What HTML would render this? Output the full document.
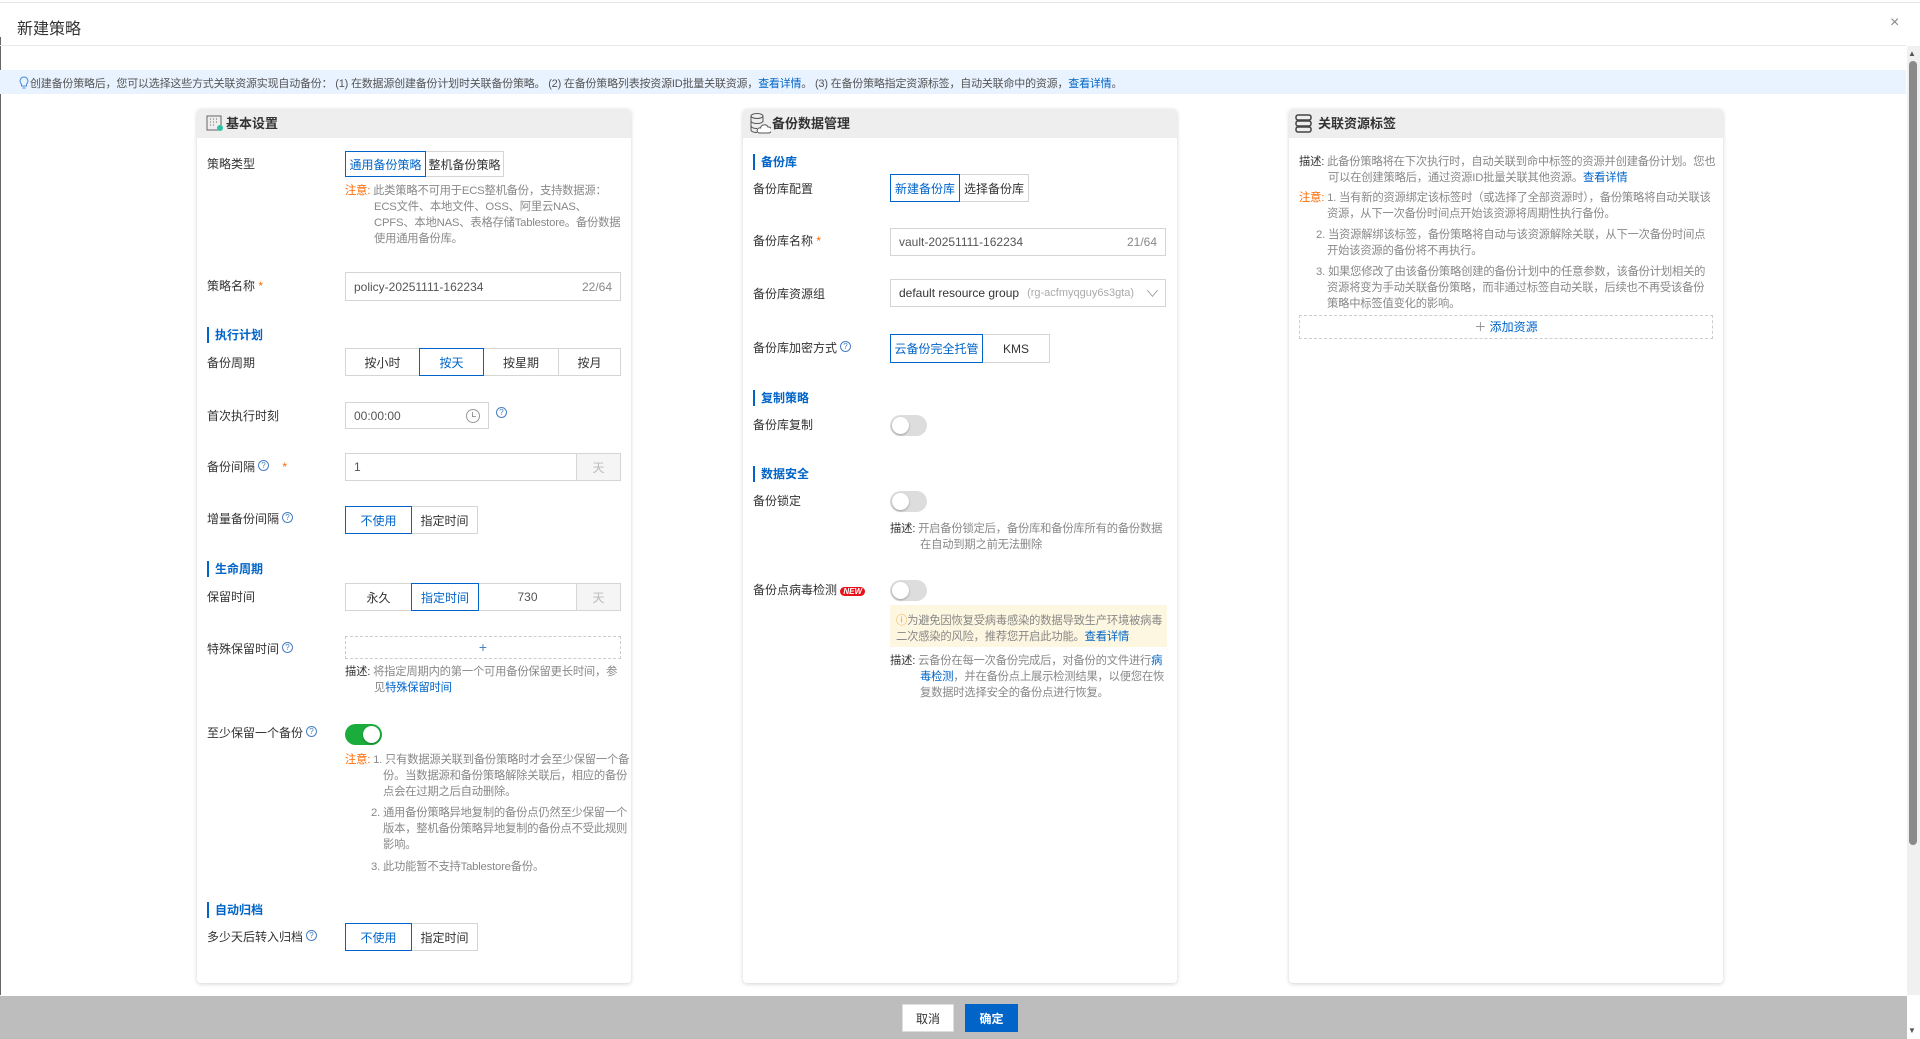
<!DOCTYPE html>
<html><head><meta charset="utf-8"><style>
*{margin:0;padding:0;box-sizing:border-box}
body{width:1920px;height:1039px;overflow:hidden;background:#fff;font-family:"Liberation Sans","Noto Sans CJK SC",sans-serif;font-size:12px;color:#333;position:relative}
.a{position:absolute}
.lbl{position:absolute;font-size:12px;color:#333;line-height:14px;white-space:nowrap}
.sec{position:absolute;font-size:12px;color:#0064c8;font-weight:bold;border-left:2px solid #0064c8;padding-left:6px;line-height:16px}
.card{position:absolute;top:109px;width:434px;height:874px;background:#fff;border-radius:4px;box-shadow:0 1px 4px rgba(0,0,0,.18);overflow:hidden}
.ch{height:29px;background:#eee;font-size:13px;font-weight:bold;color:#333;line-height:29px;padding-left:29px;position:relative}
.btn{position:absolute;border:1px solid #d5d5d5;background:#fff;text-align:center;font-size:12px;color:#333;display:flex;align-items:center;justify-content:center;white-space:nowrap}
.sel{border:1px solid #0064c8;color:#0064c8;z-index:2}
.inp{position:absolute;border:1px solid #d5d5d5;background:#fff;font-size:12px;color:#555;display:flex;align-items:center;padding:0 8px;white-space:nowrap}
.add{position:absolute;background:#f5f5f5;border:1px solid #d5d5d5;color:#bbb;display:flex;align-items:center;justify-content:center}
.txt{position:absolute;font-size:11.3px;color:#888;line-height:16px;white-space:nowrap;letter-spacing:-0.2px}
.q{display:inline-block;width:11px;height:11px;border:1px solid #4a7fc1;border-radius:50%;font-size:8px;line-height:9px;text-align:center;color:#4a7fc1;vertical-align:top;margin-left:3px}
.tg{position:absolute;width:37px;height:21px;border-radius:11px;background:#ddd}
.tg::after{content:"";position:absolute;top:2px;left:2px;width:17px;height:17px;border-radius:50%;background:#fff;box-shadow:0 1px 2px rgba(0,0,0,.3)}
.tg.on{background:#1aad3b}.tg.on::after{left:18px}
.or{color:#ff6a00}.bl{color:#0064c8}.dk{color:#333}
</style></head><body>
<div class="a" style="left:0;top:0;width:1920px;height:3px;border-bottom:1px solid #e5e5e5"></div>
<div class="a" style="left:0;top:37px;width:1px;height:958px;background:#666"></div>
<div class="a" style="left:17px;top:15px;font-size:16px;color:#333">新建策略</div>
<div class="a" style="left:1890px;top:14px;font-size:16px;color:#888">×</div>
<div class="a" style="left:0;top:45px;width:1906px;height:1px;background:#e8e8e8"></div>
<div class="a" style="left:0;top:70px;width:1906px;height:24px;background:#e8f3ff"></div>
<div class="a" style="left:18px;top:75px;font-size:11px;color:#555;white-space:nowrap;letter-spacing:-0.2px"><svg width="12" height="13" viewBox="0 0 12 13" style="vertical-align:-2px"><path d="M6 1a4 4 0 0 0-2.5 7v2h5V8A4 4 0 0 0 6 1zM4.5 12h3" fill="none" stroke="#4a8ad8"/></svg>创建备份策略后，您可以选择这些方式关联资源实现自动备份： (1) 在数据源创建备份计划时关联备份策略。 (2) 在备份策略列表按资源ID批量关联资源，<span class="bl">查看详情</span>。 (3) 在备份策略指定资源标签，自动关联命中的资源，<span class="bl">查看详情</span>。</div>
<!-- scrollbar -->
<div class="a" style="left:1907px;top:46px;width:13px;height:949px;background:#f0f0f0"></div>
<div class="a" style="left:1909px;top:61px;width:8px;height:784px;background:#8a8a8a;border-radius:4px"></div>
<div class="a" style="left:1908px;top:49px;font-size:8px;color:#555">▲</div>
<div class="a" style="left:1908px;top:1026px;font-size:8px;color:#555">▼</div>

<!-- Card 1 -->
<div class="card" style="left:197px">
<div class="ch"><svg class="a" style="left:9px;top:6px" width="18" height="17" viewBox="0 0 18 17"><rect x="1" y="1" width="14" height="14" fill="none" stroke="#666"/><path d="M4 4h1M7 4h1M10 4h1M4 7h1M7 7h1M10 7h1M4 10h1M7 10h1" stroke="#666"/><circle cx="14" cy="13" r="3" fill="#2bc3a8"/></svg>基本设置</div>
</div>
<div class="lbl" style="left:207px;top:157px">策略类型</div>
<div class="btn sel" style="left:345px;top:151px;width:81px;height:26px">通用备份策略</div>
<div class="btn" style="left:425px;top:151px;width:79px;height:26px">整机备份策略</div>
<div class="txt" style="left:345px;top:183px"><span class="or">注意:</span> 此类策略不可用于ECS整机备份，支持数据源：</div>
<div class="txt" style="left:374px;top:199px">ECS文件、本地文件、OSS、阿里云NAS、</div>
<div class="txt" style="left:374px;top:215px">CPFS、本地NAS、表格存储Tablestore。备份数据</div>
<div class="txt" style="left:374px;top:231px">使用通用备份库。</div>
<div class="lbl" style="left:207px;top:279px">策略名称 <span class="or">*</span></div>
<div class="inp" style="left:345px;top:272px;width:276px;height:29px;justify-content:space-between"><span>policy-20251111-162234</span><span style="color:#888">22/64</span></div>
<div class="sec" style="left:207px;top:327px">执行计划</div>
<div class="lbl" style="left:207px;top:356px">备份周期</div>
<div class="btn" style="left:345px;top:348px;width:75px;height:28px">按小时</div>
<div class="btn sel" style="left:419px;top:348px;width:65px;height:28px">按天</div>
<div class="btn" style="left:483px;top:348px;width:76px;height:28px">按星期</div>
<div class="btn" style="left:558px;top:348px;width:63px;height:28px">按月</div>
<div class="lbl" style="left:207px;top:409px">首次执行时刻</div>
<div class="inp" style="left:345px;top:402px;width:144px;height:27px;justify-content:space-between"><span>00:00:00</span><span style="display:inline-block;width:14px;height:14px;border:1px solid #999;border-radius:50%;position:relative"><span style="position:absolute;left:5px;top:2px;width:4px;height:5px;border-left:1px solid #999;border-bottom:1px solid #999"></span></span></div>
<div class="a" style="left:493px;top:407px"><span class="q">?</span></div>
<div class="lbl" style="left:207px;top:460px">备份间隔<span class="q">?</span> &nbsp; &nbsp;<span class="or">*</span></div>
<div class="inp" style="left:345px;top:453px;width:232px;height:28px">1</div>
<div class="add" style="left:576px;top:453px;width:45px;height:28px">天</div>
<div class="lbl" style="left:207px;top:512px">增量备份间隔<span class="q">?</span></div>
<div class="btn sel" style="left:345px;top:506px;width:67px;height:28px">不使用</div>
<div class="btn" style="left:411px;top:506px;width:67px;height:28px">指定时间</div>
<div class="sec" style="left:207px;top:561px">生命周期</div>
<div class="lbl" style="left:207px;top:590px">保留时间</div>
<div class="btn" style="left:345px;top:583px;width:67px;height:28px">永久</div>
<div class="btn sel" style="left:411px;top:583px;width:68px;height:28px">指定时间</div>
<div class="inp" style="left:478px;top:583px;width:99px;height:28px;justify-content:center">730</div>
<div class="add" style="left:576px;top:583px;width:45px;height:28px">天</div>
<div class="lbl" style="left:207px;top:642px">特殊保留时间<span class="q">?</span></div>
<div class="a" style="left:345px;top:636px;width:276px;height:23px;border:1px dashed #ccc;text-align:center;color:#4a7fc1;font-size:14px;line-height:20px">+</div>
<div class="txt" style="left:345px;top:664px"><span class="dk">描述:</span> 将指定周期内的第一个可用备份保留更长时间，参</div>
<div class="txt" style="left:374px;top:680px">见<span class="bl">特殊保留时间</span></div>
<div class="lbl" style="left:207px;top:726px">至少保留一个备份<span class="q">?</span></div>
<div class="tg on" style="left:345px;top:724px"></div>
<div class="txt" style="left:345px;top:752px"><span class="or">注意:</span> 1. 只有数据源关联到备份策略时才会至少保留一个备</div>
<div class="txt" style="left:383px;top:768px">份。当数据源和备份策略解除关联后，相应的备份</div>
<div class="txt" style="left:383px;top:784px">点会在过期之后自动删除。</div>
<div class="txt" style="left:371px;top:805px">2. 通用备份策略异地复制的备份点仍然至少保留一个</div>
<div class="txt" style="left:383px;top:821px">版本，整机备份策略异地复制的备份点不受此规则</div>
<div class="txt" style="left:383px;top:837px">影响。</div>
<div class="txt" style="left:371px;top:859px">3. 此功能暂不支持Tablestore备份。</div>
<div class="sec" style="left:207px;top:902px">自动归档</div>
<div class="lbl" style="left:207px;top:930px">多少天后转入归档<span class="q">?</span></div>
<div class="btn sel" style="left:345px;top:923px;width:67px;height:28px">不使用</div>
<div class="btn" style="left:411px;top:923px;width:67px;height:28px">指定时间</div>

<!-- Card 2 -->
<div class="card" style="left:743px">
<div class="ch"><svg class="a" style="left:6px;top:3px" width="22" height="24" viewBox="0 0 22 24"><ellipse cx="8" cy="4" rx="6" ry="2.5" fill="none" stroke="#555"/><path d="M2 4v14c0 1.4 2.7 2.5 6 2.5M14 4v6M2 9c0 1.4 2.7 2.5 6 2.5s6-1.1 6-2.5M2 14c0 1.4 2.7 2.5 6 2.5" fill="none" stroke="#555"/><path d="M10 21h10a3 3 0 0 0-1-6 4 4 0 0 0-7.5 1A2.5 2.5 0 0 0 10 21z" fill="#fff" stroke="#555"/></svg>备份数据管理</div>
</div>
<div class="sec" style="left:753px;top:154px">备份库</div>
<div class="lbl" style="left:753px;top:182px">备份库配置</div>
<div class="btn sel" style="left:890px;top:174px;width:70px;height:28px">新建备份库</div>
<div class="btn" style="left:959px;top:174px;width:70px;height:28px">选择备份库</div>
<div class="lbl" style="left:753px;top:234px">备份库名称 <span class="or">*</span></div>
<div class="inp" style="left:890px;top:228px;width:276px;height:28px;justify-content:space-between"><span>vault-20251111-162234</span><span style="color:#888">21/64</span></div>
<div class="lbl" style="left:753px;top:287px">备份库资源组</div>
<div class="inp" style="left:890px;top:279px;width:276px;height:28px;color:#333"><span>default resource group</span><span style="color:#aaa;margin-left:8px;font-size:11px">(rg-acfmyqguy6s3gta)</span><span style="margin-left:auto;color:#999;transform:scaleX(1.6);font-size:9px">∨</span></div>
<div class="lbl" style="left:753px;top:341px">备份库加密方式<span class="q">?</span></div>
<div class="btn sel" style="left:890px;top:334px;width:93px;height:29px">云备份完全托管</div>
<div class="btn" style="left:982px;top:334px;width:68px;height:29px">KMS</div>
<div class="sec" style="left:753px;top:390px">复制策略</div>
<div class="lbl" style="left:753px;top:418px">备份库复制</div>
<div class="tg" style="left:890px;top:415px"></div>
<div class="sec" style="left:753px;top:466px">数据安全</div>
<div class="lbl" style="left:753px;top:494px">备份锁定</div>
<div class="tg" style="left:890px;top:491px"></div>
<div class="txt" style="left:890px;top:521px"><span class="dk">描述:</span> 开启备份锁定后，备份库和备份库所有的备份数据</div>
<div class="txt" style="left:920px;top:537px">在自动到期之前无法删除</div>
<div class="lbl" style="left:753px;top:583px">备份点病毒检测 <span style="background:#e8101a;color:#fff;font-size:8px;font-weight:bold;font-style:italic;border-radius:6px;padding:0 3px">NEW</span></div>
<div class="tg" style="left:890px;top:580px"></div>
<div class="a" style="left:890px;top:605px;width:277px;height:42px;background:#fdf6e0"></div>
<div class="txt" style="left:896px;top:613px"><span style="color:#e6a23c">ⓘ</span>为避免因恢复受病毒感染的数据导致生产环境被病毒</div>
<div class="txt" style="left:896px;top:629px">二次感染的风险，推荐您开启此功能。<span class="bl">查看详情</span></div>
<div class="txt" style="left:890px;top:653px"><span class="dk">描述:</span> 云备份在每一次备份完成后，对备份的文件进行<span class="bl">病</span></div>
<div class="txt" style="left:920px;top:669px"><span class="bl">毒检测</span>，并在备份点上展示检测结果，以便您在恢</div>
<div class="txt" style="left:920px;top:685px">复数据时选择安全的备份点进行恢复。</div>

<!-- Card 3 -->
<div class="card" style="left:1289px">
<div class="ch"><svg class="a" style="left:6px;top:5px" width="18" height="19" viewBox="0 0 18 19"><rect x="1" y="1" width="15" height="5" rx="2" fill="none" stroke="#444" stroke-width="1.5"/><rect x="1" y="7" width="15" height="5" rx="2" fill="none" stroke="#444" stroke-width="1.5"/><rect x="1" y="13" width="15" height="5" rx="2" fill="none" stroke="#444" stroke-width="1.5"/></svg>关联资源标签</div>
</div>
<div class="txt" style="left:1299px;top:154px"><span class="dk">描述:</span> 此备份策略将在下次执行时，自动关联到命中标签的资源并创建备份计划。您也</div>
<div class="txt" style="left:1328px;top:170px">可以在创建策略后，通过资源ID批量关联其他资源。<span class="bl">查看详情</span></div>
<div class="txt" style="left:1299px;top:190px"><span class="or">注意:</span> 1. 当有新的资源绑定该标签时（或选择了全部资源时），备份策略将自动关联该</div>
<div class="txt" style="left:1327px;top:206px">资源，从下一次备份时间点开始该资源将周期性执行备份。</div>
<div class="txt" style="left:1316px;top:227px">2. 当资源解绑该标签，备份策略将自动与该资源解除关联，从下一次备份时间点</div>
<div class="txt" style="left:1327px;top:243px">开始该资源的备份将不再执行。</div>
<div class="txt" style="left:1316px;top:264px">3. 如果您修改了由该备份策略创建的备份计划中的任意参数，该备份计划相关的</div>
<div class="txt" style="left:1327px;top:280px">资源将变为手动关联备份策略，而非通过标签自动关联，后续也不再受该备份</div>
<div class="txt" style="left:1327px;top:296px">策略中标签值变化的影响。</div>
<div class="a" style="left:1299px;top:315px;width:414px;height:24px;border:1px dashed #ccc;text-align:center;color:#0064c8;line-height:22px"><span style="color:#888">＋</span> 添加资源</div>

<!-- Footer -->
<div class="a" style="left:0;top:996px;width:1907px;height:43px;background:#bdbdbd"></div>
<div class="btn" style="left:902px;top:1004px;width:52px;height:28px;border-color:#ddd">取消</div>
<div class="btn" style="left:965px;top:1004px;width:53px;height:28px;background:#0064c8;border-color:#0064c8;color:#fff;font-weight:bold">确定</div>
</body></html>
